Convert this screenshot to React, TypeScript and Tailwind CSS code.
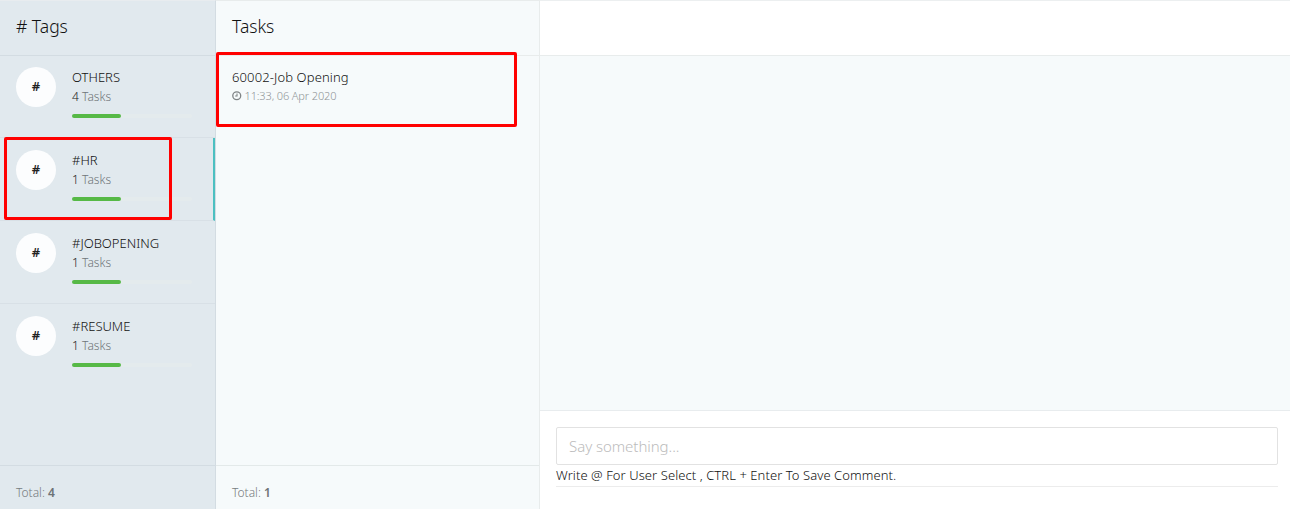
interface Tag {
  name: string;
  count: number;
  active?: boolean;
}

const tags: Tag[] = [
  { name: "OTHERS", count: 4 },
  { name: "#HR", count: 1, active: true },
  { name: "#JOBOPENING", count: 1 },
  { name: "#RESUME", count: 1 },
];

function TagRow({ tag }: { tag: Tag }) {
  return (
    <div
      className={`flex h-[83px] gap-4 border-b border-b-[#d8e0e6] pt-3 pl-4 last:border-b-0 ${
        tag.active ? "border-r-2 border-r-[#4cc0c1]" : ""
      }`}
    >
      <div className="flex size-10 shrink-0 items-center justify-center rounded-full bg-[#fcfdfe] pb-px text-[13px] font-semibold text-[#222]">
        #
      </div>
      <div className="w-[120px] text-[13px] leading-5">
        <p className="whitespace-nowrap text-[#111]">{tag.name}</p>
        <p className="text-[12px] text-[#6f7579]">
          <span className="text-[#222]">{tag.count}</span> Tasks
        </p>
        <div className="mt-[7px] h-1 rounded-full bg-[#e4ebed]">
          <div className="h-1 w-[49px] rounded-full bg-[#56b946]" />
        </div>
      </div>
    </div>
  );
}

function Total({ value }: { value: number }) {
  return (
    <div className="h-[43px] pt-[18px] pl-4 text-[12px] leading-[18px] text-[#767c7e]">
      Total: <b className="font-semibold text-[#6d7376]">{value}</b>
    </div>
  );
}

export default function App() {
  return (
    <div className="relative flex h-[509px] w-[1290px] overflow-hidden bg-[#f6fafb] font-['Noto_Sans',sans-serif] font-light">
      <aside className="flex w-[216px] flex-col border-t border-r border-t-[#e8ecef] border-r-[#d3dce2] bg-[#e1e9ee]">
        <h2 className="h-[55px] shrink-0 border-b border-[#d3dce2] pl-4 text-[17.5px] leading-[51px] text-[#111]">
          # Tags
        </h2>
        <div className="-mt-px flex-1">
          {tags.map((tag) => (
            <TagRow key={tag.name} tag={tag} />
          ))}
        </div>
        <div className="border-t border-[#d3dce2]">
          <Total value={4} />
        </div>
      </aside>

      <section className="flex w-[324px] flex-col border-t border-r border-[#e8ecec]">
        <h2 className="h-[55px] shrink-0 border-b border-[#e8ecec] pl-4 text-[17.5px] leading-[51px] text-[#111]">
          Tasks
        </h2>
        <div className="flex-1 pt-[11px] pl-4">
          <p className="text-[13px] leading-5 tracking-[0.12px] text-[#111]">60002-Job Opening</p>
          <p className="flex items-center gap-[3px] text-[11px] leading-[18px] tracking-[-0.13px] text-[#8e9496]">
            <svg viewBox="0 0 18 18" className="size-[9.5px]" fill="none" stroke="#7f8486" strokeWidth="2.5">
              <circle cx="9" cy="9" r="7.5" />
              <path d="M9.5 4.5v5H6" strokeWidth="2" />
            </svg>
            11:33, 06 Apr 2020
          </p>
        </div>
        <div className="border-t border-[#e3e9e9]">
          <Total value={1} />
        </div>
      </section>

      <main className="flex flex-1 flex-col border-t border-[#eceff0]">
        <div className="h-[55px] shrink-0 border-b border-[#e8ecec] bg-white" />
        <div className="flex-1" />
        <div className="h-[99px] border-t border-[#e8ecee] bg-white pt-4 pr-3 pl-4">
          <input
            className="block h-[38px] w-full rounded-[2px] border border-[#e2e2e2] px-3 text-[15px] tracking-[-0.05px] outline-none placeholder:text-[#bcbcbc]"
            placeholder="Say something..."
          />
          <p className="h-[22px] border-b border-[#ececec] text-[13px] leading-[21px] tracking-[0.07px] whitespace-nowrap text-[#111]">
            Write @ For User Select , CTRL + Enter To Save Comment.
          </p>
        </div>
      </main>

      {/* highlight frames */}
      <div className="pointer-events-none absolute top-[137px] left-[4px] h-[83px] w-[168px] rounded-[2px] border-3 border-[#f00]" />
      <div className="pointer-events-none absolute top-[52px] left-[216px] h-[75px] w-[301px] rounded-[2px] border-3 border-[#f00]" />
    </div>
  );
}
